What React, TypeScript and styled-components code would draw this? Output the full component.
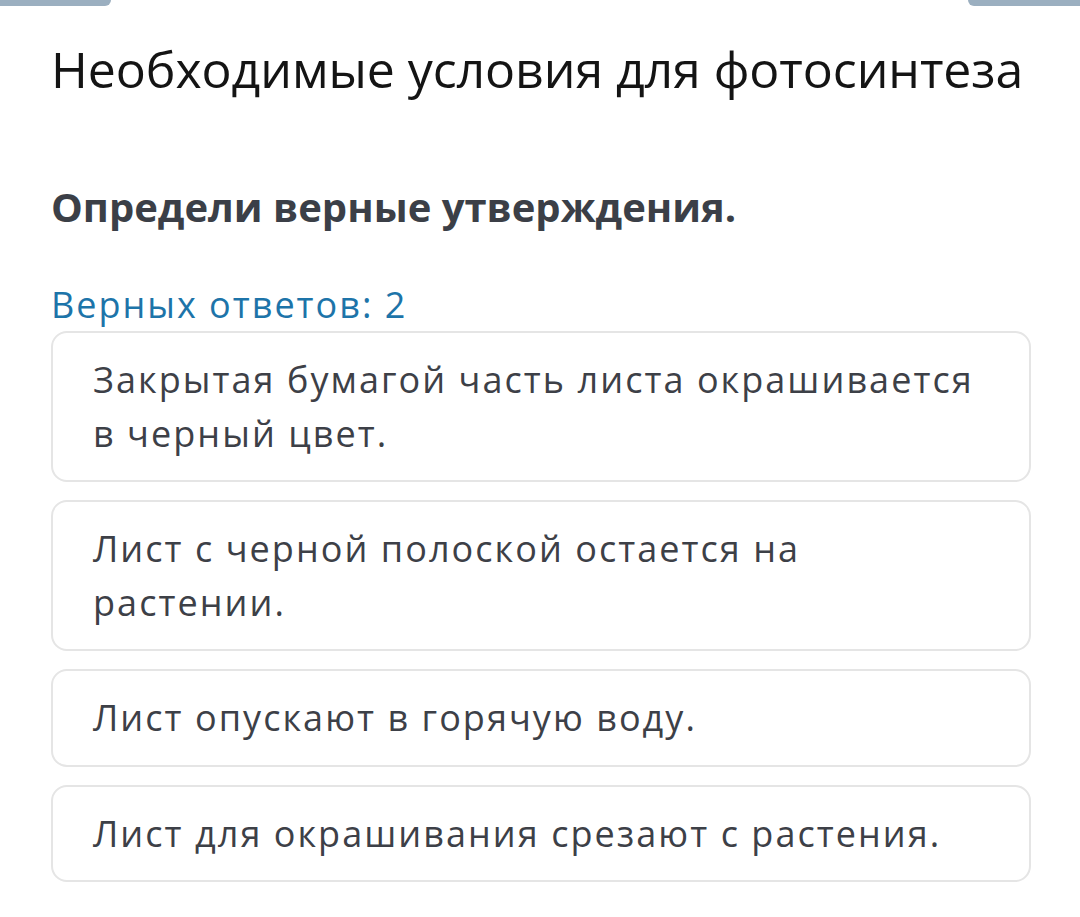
import React from "react";
import styled, { createGlobalStyle } from "styled-components";

const Global = createGlobalStyle`
  html, body { margin: 0; padding: 0; background: #ffffff; }
  body { font-family: "Open Sans", "Noto Sans", sans-serif; }
`;

const Page = styled.div`
  width: 1080px;
  min-height: 917px;
  background: #fff;
  overflow: hidden;
`;

const TopBars = styled.div`
  display: flex;
  justify-content: space-between;
  height: 6px;
`;

const Bar = styled.div<{ $side: "left" | "right" }>`
  width: ${(p) => (p.$side === "left" ? "111px" : "112px")};
  height: 6px;
  background: #9bafc0;
  border-radius: ${(p) => (p.$side === "left" ? "0 0 6px 0" : "0 0 0 6px")};
`;

const Content = styled.div`
  padding: 0 49px 0 51px;
  display: flex;
  flex-direction: column;
`;

const Title = styled.h1`
  margin: 33px 0 0;
  font-family: "Open Sans", sans-serif;
  font-weight: 400;
  font-size: 50px;
  line-height: 60px;
  letter-spacing: -0.08px;
  color: #141414;
`;

const Prompt = styled.h2`
  margin: 84px 0 0;
  font-family: "Open Sans", sans-serif;
  font-weight: 700;
  font-size: 40px;
  line-height: 48px;
  color: #3b3f47;
`;

const Count = styled.div`
  margin-top: 52px;
  font-family: "Open Sans", sans-serif;
  font-size: 36px;
  line-height: 44px;
  letter-spacing: 2px;
  color: #1d74a9;
`;

const Options = styled.div`
  margin-top: 4px;
  display: flex;
  flex-direction: column;
  gap: 18px;
`;

const Option = styled.div`
  border: 2px solid #e5e5e5;
  border-radius: 16px;
  padding: 20px 40px 20px 40px;
  font-family: "Open Sans", sans-serif;
  font-size: 36px;
  line-height: 53.5px;
  letter-spacing: 2.05px;
  color: #3d4047;
`;

const options = [
  "Закрытая бумагой часть листа окрашивается в черный цвет.",
  "Лист с черной полоской остается на растении.",
  "Лист опускают в горячую воду.",
  "Лист для окрашивания срезают с растения.",
];

export default function App() {
  return (
    <Page>
      <Global />
      <TopBars>
        <Bar $side="left" />
        <Bar $side="right" />
      </TopBars>
      <Content>
        <Title>Необходимые условия для фотосинтеза</Title>
        <Prompt>Определи верные утверждения.</Prompt>
        <Count>Верных ответов: 2</Count>
        <Options>
          {options.map((o) => (
            <Option key={o}>{o}</Option>
          ))}
        </Options>
      </Content>
    </Page>
  );
}
